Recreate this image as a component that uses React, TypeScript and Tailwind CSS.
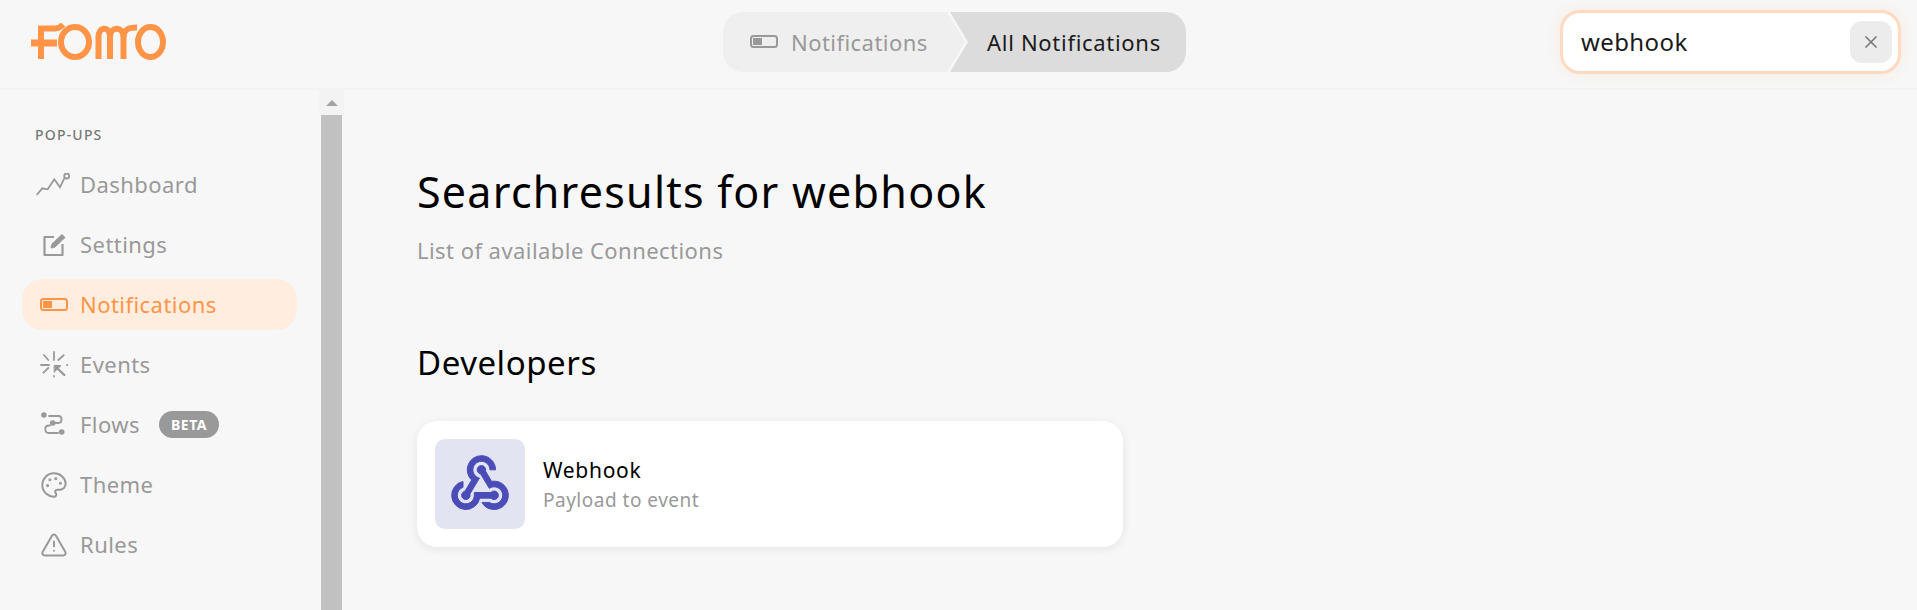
import { Palette, TriangleAlert, X } from "lucide-react";
import type { ReactNode } from "react";

const font = "font-['Noto_Sans',sans-serif]";

const Logo = () => (
  <svg width="140" height="38" viewBox="0 0 140 38" fill="none" stroke="#ff9447" strokeWidth="6">
    <path d="M0 20H26" strokeWidth="7" />
    <path d="M10 36V5.5H24C28 5.5 30 4 32 1.5" />
    <ellipse cx="44" cy="19" rx="14" ry="15" />
    <path d="M67.5 36V14C67.5 3 79 3 79 14V36" />
    <path d="M79 14C79 3 92.5 3 92.5 14V36" />
    <path d="M92.5 14C92.5 6 98 4.5 106 4.5" />
    <ellipse cx="119.5" cy="19" rx="12.5" ry="15" />
  </svg>
);

const WebhookIcon = () => (
  <svg width="68" height="68" viewBox="0 0 24 24" fill="#4a4cb8" stroke="#4a4cb8" strokeWidth="0.35">
    <path d="M10 15h5.88c.27-.31.67-.5 1.12-.5.83 0 1.5.67 1.5 1.5s-.67 1.5-1.5 1.5c-.44 0-.84-.19-1.12-.5H11.9A5 5 0 1 1 6 11.1v2.07c-1.16.41-2 1.53-2 2.83 0 1.65 1.35 3 3 3s3-1.35 3-3v-1zm2.5-11c1.65 0 3 1.35 3 3h2c0-2.76-2.24-5-5-5a5.002 5.002 0 0 0-3.45 8.62l-2.35 3.9c-.68.14-1.2.75-1.2 1.48 0 .83.67 1.5 1.5 1.5a1.498 1.498 0 0 0 1.43-1.95l3.38-5.63C10.49 9.61 9.5 8.42 9.5 7c0-1.65 1.35-3 3-3zm4.5 9c-.64 0-1.23.2-1.72.54l-3.05-5.07C11.53 8.35 11 7.74 11 7c0-.83.67-1.5 1.5-1.5S14 6.17 14 7c0 .15-.02.29-.06.43l2.19 3.65c.28-.05.57-.08.87-.08 2.76 0 5 2.24 5 5s-2.24 5-5 5a5 5 0 0 1-4.33-2.5h2.67c.48.32 1.05.5 1.66.5 1.65 0 3-1.35 3-3s-1.35-3-3-3z" />
  </svg>
);

const ToggleIcon = ({ color, size = 28 }: { color: string; size?: number }) => (
  <svg width={size} height={size * 0.5} viewBox="0 0 28 14" fill="none">
    <rect x="1" y="1" width="26" height="11" rx="2.5" stroke={color} strokeWidth="2" />
    <rect x="3" y="3" width="9" height="7" fill={color} />
  </svg>
);

const DashboardIcon = () => (
  <svg width="36" height="24" viewBox="0 0 36 24" fill="none" stroke="#999" strokeWidth="1.8">
    <path d="M0.7 22L6.3 15.3L11.7 16.3L18.3 6.3L24 14.3L28.3 5.3" />
    <circle cx="30.7" cy="3" r="2.5" />
  </svg>
);

const SettingsIcon = () => (
  <svg width="24" height="24" viewBox="0 0 24 24" fill="none" stroke="#999" strokeWidth="2.2" strokeLinejoin="round">
    <path d="M12 4H2.5V22H20.5V11" />
    <path d="M9 15L10 11L20 1.5L23 4.5L13 14Z" fill="#999" strokeWidth="1" />
  </svg>
);

const EventsIcon = () => (
  <svg width="28" height="28" viewBox="0 0 28 28" fill="none" stroke="#999" strokeWidth="1.8" strokeLinecap="round">
    <path d="M14 1V9M14 25V25.6M1 14H9M27 14H27.5M4 4L8.3 9M23.7 4.3L18.3 9M3.5 21.7L8.3 17" />
    <path d="M14.5 14.5H21L14.5 21Z" fill="#999" stroke="#999" strokeWidth="1" strokeLinejoin="round" />
    <path d="M16 16L24.3 24" strokeWidth="2.4" />
  </svg>
);

const FlowsIcon = () => (
  <svg width="26" height="26" viewBox="0 0 26 26" fill="none" stroke="#999" strokeWidth="1.8" strokeLinecap="round">
    <circle cx="2.9" cy="3" r="2.8" fill="#999" stroke="none" />
    <circle cx="11.7" cy="11" r="2.8" fill="#999" stroke="none" />
    <circle cx="20.7" cy="20" r="2.8" fill="#999" stroke="none" />
    <path d="M8 4H17.5C21.5 4 21.5 11 17.5 11H14M9 13.5H8C3 13.5 3 21 8 21H17" />
  </svg>
);

type NavItem = { label: string; icon: ReactNode; active?: boolean; badge?: string };

const navItems: NavItem[] = [
  { label: "Dashboard", icon: <DashboardIcon /> },
  { label: "Settings", icon: <SettingsIcon /> },
  { label: "Notifications", icon: <ToggleIcon color="#ff9447" />, active: true },
  { label: "Events", icon: <EventsIcon /> },
  { label: "Flows", icon: <FlowsIcon />, badge: "BETA" },
  { label: "Theme", icon: <Palette size={28} strokeWidth={1.7} color="#999" /> },
  { label: "Rules", icon: <TriangleAlert size={28} strokeWidth={1.7} color="#999" /> },
];

export default function App() {
  return (
    <div className={`${font} flex h-[610px] w-[1917px] flex-col overflow-hidden bg-[#f7f7f7]`}>
      <header className="flex h-[90px] shrink-0 items-center border-b-2 border-[#f3f3f3] pr-4 pb-[4px]">
        <div className="w-[723px] pl-[31px]">
          <Logo />
        </div>
        <div className="flex h-[60px] overflow-hidden rounded-[20px] text-[22px] tracking-[0.45px]">
          <div className="flex w-[242px] items-center gap-[13px] bg-[#efefef] pl-[27px] text-[#999] [clip-path:polygon(0_0,224px_0,100%_50%,224px_100%,0_100%)]">
            <ToggleIcon color="#999" />
            <span>Notifications</span>
          </div>
          <div className="-ml-[15px] flex w-[236px] items-center bg-[#dcdcdc] pl-[37px] tracking-[0.7px] text-[#1a1a1a] [clip-path:polygon(0_0,100%_0,100%_100%,0_100%,18px_50%)]">
            All Notifications
          </div>
        </div>
        <div className="ml-auto flex h-[64px] w-[341px] items-center justify-between rounded-[20px] border-[3px] border-[#ffd9c0] bg-white pr-[6px] pl-[18px] text-[24px] tracking-[0.4px] text-[#1a1a1a] shadow-[0_0_14px_rgba(255,148,71,0.12)]">
          <span>webhook</span>
          <span className="flex h-[42px] w-[42px] items-center justify-center rounded-[12px] bg-[#ececec]">
            <X size={20} strokeWidth={2} color="#777" />
          </span>
        </div>
      </header>

      <div className="flex min-h-0 flex-1">
        <aside className="flex w-[319px] shrink-0 flex-col pt-[36px] pl-[22px]">
          <div className="mb-[15px] pl-[13px] text-[14px] leading-[18px] font-medium tracking-[1.2px] text-[#777]">POP-UPS</div>
          <nav className="flex w-[275px] flex-col gap-[9px]">
            {navItems.map((item) => (
              <div
                key={item.label}
                className={`flex h-[51px] items-center rounded-[20px] pl-[13px] text-[22px] tracking-[0.45px] ${
                  item.active ? "bg-[#ffeee0] text-[#ff9447]" : "text-[#999]"
                }`}
              >
                <span className="flex w-[45px] shrink-0 items-center justify-center pr-[8px]">{item.icon}</span>
                <span>{item.label}</span>
                {item.badge && (
                  <span className="ml-[19px] flex h-[27px] items-center rounded-full bg-[#999] px-[12px] text-[14px] font-bold tracking-[0.5px] text-white">
                    {item.badge}
                  </span>
                )}
              </div>
            ))}
          </nav>
        </aside>

        <div className="flex w-[25px] shrink-0 flex-col items-center bg-[#f7f7f7]">
          <div className="flex h-[25px] w-full items-center justify-center bg-[#f3f3f3]">
            <span className="h-0 w-0 border-x-[6px] border-b-[6px] border-x-transparent border-b-[#a3a3a3]" />
          </div>
          <div className="w-[21px] flex-1 bg-[#c1c1c1]" />
        </div>

        <main className="flex-1 pt-[74px] pl-[73px]">
          <h1 className="text-[43px] leading-[56px] tracking-[1.25px] text-black">Searchresults for webhook</h1>
          <p className="mt-[15px] text-[22px] leading-[30px] tracking-[0.45px] text-[#999]">List of available Connections</p>
          <h2 className="mt-[76px] text-[33px] leading-[44px] tracking-[0.55px] text-black">Developers</h2>
          <div className="mt-[36px] flex h-[126px] w-[706px] items-center gap-[18px] rounded-[20px] bg-white pl-[18px] shadow-[0_2px_10px_rgba(0,0,0,0.08)]">
            <div className="flex h-[90px] w-[90px] items-center justify-center rounded-[10px] bg-[#e2e4f1]">
              <WebhookIcon />
            </div>
            <div>
              <div className="text-[21px] leading-[30px] tracking-[0.7px] text-black">Webhook</div>
              <div className="mt-[1px] text-[19px] leading-[28px] tracking-[0.5px] text-[#999]">Payload to event</div>
            </div>
          </div>
        </main>
      </div>
    </div>
  );
}
